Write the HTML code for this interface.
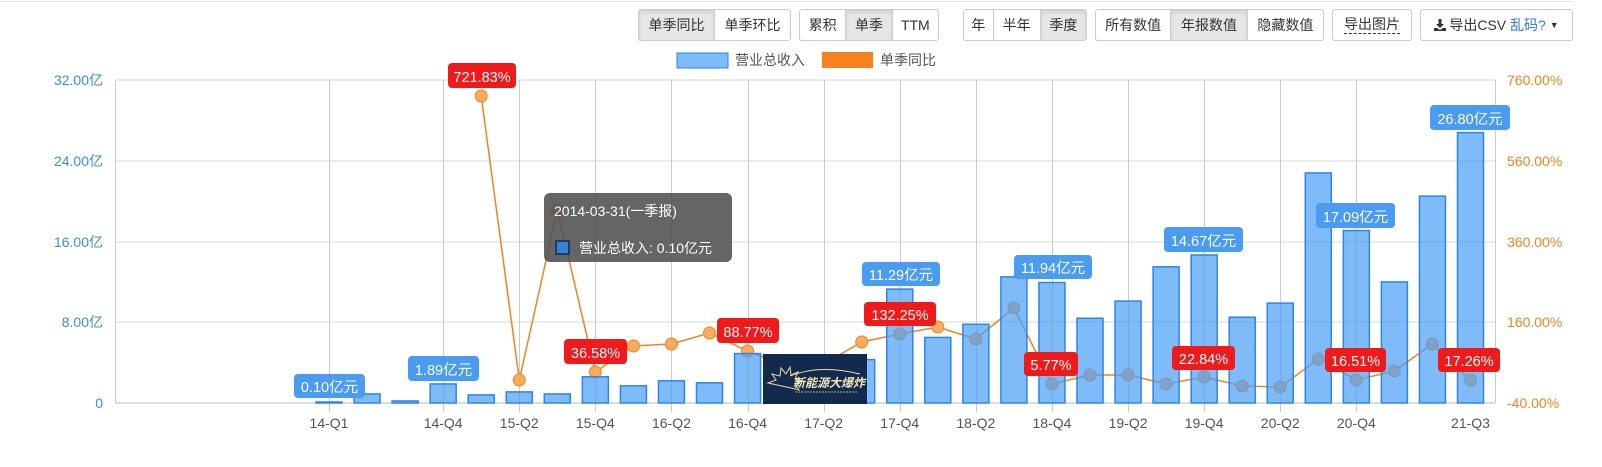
<!DOCTYPE html>
<html><head><meta charset="utf-8">
<style>
html,body{margin:0;padding:0;background:#fff;width:1602px;height:467px;overflow:hidden;font-family:"Liberation Sans","Noto Sans CJK SC",sans-serif;}
.tb{position:absolute;top:9px;height:32px;border:1px solid #ccc;border-radius:3px;display:flex;box-sizing:border-box;background:#fff;overflow:hidden}
.tb span{display:flex;align-items:center;justify-content:center;font-size:14px;color:#333;border-right:1px solid #ccc;box-sizing:border-box;height:100%}
.tb span:last-child{border-right:none}
.tb span.on{background:#e6e6e6;box-shadow:inset 0 2px 4px rgba(0,0,0,.1)}
svg{position:absolute;left:0;top:0}
</style></head><body>
<div style="position:absolute;left:0;top:1px;width:1573px;height:1px;background:#e5e5e5"></div>
<div class="tb" style="left:638px;width:153px"><span class="on" style="width:77px">单季同比</span><span style="width:76px">单季环比</span></div>
<div class="tb" style="left:799px;width:140px"><span style="width:47px">累积</span><span class="on" style="width:47px">单季</span><span style="width:46px">TTM</span></div>
<div class="tb" style="left:963px;width:124px"><span style="width:30px">年</span><span style="width:48px">半年</span><span class="on" style="width:46px">季度</span></div>
<div class="tb" style="left:1095px;width:229px"><span style="width:76px">所有数值</span><span class="on" style="width:77px">年报数值</span><span style="width:76px">隐藏数值</span></div>
<div class="tb" style="left:1332px;width:80px"><span style="width:80px"><u style="text-decoration:none;border-bottom:1px dashed #333;line-height:17px">导出图片</u></span></div>
<div class="tb" style="left:1420px;width:153px"><span style="width:153px">
<svg style="position:static;margin-right:3px" width="12" height="12" viewBox="0 0 12 12"><path d="M4.5 0h3v5h2.5l-4 4-4-4h2.5z M0 9h3l3 2 3-2h3v3H0z" fill="#333"/></svg>导出CSV&nbsp;<span style="border:none;color:#2a7ae2;width:auto">乱码?</span>&nbsp;<span style="border:none;width:auto;font-size:9px">▼</span></span></div>

<svg width="1602" height="467" id="c" font-family="Liberation Sans, Noto Sans CJK SC, sans-serif"></svg>
<script>
var s=document.getElementById('c'),h='';
h+='<rect x="677" y="53" width="51" height="15" fill="#80bbf9" stroke="#2a86e8"/><text x="735" y="65" font-size="14" fill="#555">营业总收入</text>';
h+='<rect x="822" y="52" width="51" height="16" fill="#f5821f"/><text x="880" y="65" font-size="14" fill="#555">单季同比</text>';
var gy=[80,161,242,322,403],ll=['32.00亿','24.00亿','16.00亿','8.00亿','0'],rl=['760.00%','560.00%','360.00%','160.00%','-40.00%'];
for(var k=0;k<5;k++){h+='<line x1="115" x2="1495" y1="'+gy[k]+'" y2="'+gy[k]+'" stroke="'+(k==4?'#bbb':'#d8d8d8')+'"/>';
h+='<text x="103" y="'+(gy[k]+5)+'" text-anchor="end" font-size="14" fill="#3a8de0">'+ll[k]+'</text>';
h+='<text x="1507" y="'+(gy[k]+5)+'" font-size="14" fill="#f5821f">'+rl[k]+'</text>';}
h+='<line x1="115.5" x2="115.5" y1="80" y2="403" stroke="#ccc"/><line x1="1495.5" x2="1495.5" y1="80" y2="403" stroke="#ccc"/>';
function X(i){return 329+38.05*i;}
var labs={0:'14-Q1',3:'14-Q4',5:'15-Q2',7:'15-Q4',9:'16-Q2',11:'16-Q4',13:'17-Q2',15:'17-Q4',17:'18-Q2',19:'18-Q4',21:'19-Q2',23:'19-Q4',25:'20-Q2',27:'20-Q4',30:'21-Q3'};
for(var i in labs){var x=Math.round(X(+i))+.5;if(i!=30)h+='<line x1="'+x+'" x2="'+x+'" y1="80" y2="412" stroke="#ccc"/>';
h+='<text x="'+X(+i)+'" y="428" text-anchor="middle" font-size="14" fill="#555">'+labs[i]+'</text>';}
var v=[0.1,0.9,0.2,1.89,0.8,1.1,0.9,2.6,1.7,2.2,2.0,4.9,4.5,4.6,4.3,11.29,6.5,7.8,12.5,11.94,8.4,10.1,13.5,14.67,8.5,9.9,22.8,17.09,12.0,20.5,26.8];
var py={4:96,5:380,6:210,7:372,8:346,9:344,10:333,11:351,12:366,13:364,14:342,15:334,16:327,17:339,18:308,19:384,20:375,21:375,22:384,23:377,24:386,25:387,26:359,27:380,28:371,29:344,30:380};
var pts=[];for(var i=4;i<=30;i++)pts.push(X(i).toFixed(1)+','+py[i]);
h+='<polyline points="'+pts.join(' ')+'" fill="none" stroke="#f5821f" stroke-width="1.5"/>';
for(var i=4;i<=30;i++)h+='<circle cx="'+X(i)+'" cy="'+py[i]+'" r="6" fill="#f8ad5e" stroke="#f5821f"/>';
for(var i=0;i<31;i++){var t=403-v[i]*10.09;h+='<rect x="'+(X(i)-13)+'" y="'+t+'" width="26" height="'+(403-t)+'" fill="rgba(74,158,246,0.7)" stroke="#2a86e8" stroke-width="1.5"/>';}
function lab(x1,x2,y1,y2,txt,c){h+='<rect x="'+x1+'" y="'+y1+'" width="'+(x2-x1)+'" height="'+(y2-y1)+'" rx="4" fill="'+c+'"/><text x="'+((x1+x2)/2)+'" y="'+(y2-6)+'" text-anchor="middle" font-size="14.5" fill="#fff">'+txt+'</text>';}
var B='#4a9cf2',R='#f01a1a';
lab(294,365,374,398,'0.10亿元',B);lab(408,479,356,381,'1.89亿元',B);lab(862,940,262,286,'11.29亿元',B);lab(1014,1092,255,279,'11.94亿元',B);
lab(1164,1243,227,252,'14.67亿元',B);lab(1316,1395,203,228,'17.09亿元',B);lab(1430,1510,105,130,'26.80亿元',B);
lab(448,516,63,88,'721.83%',R);lab(564,627,339,364,'36.58%',R);lab(717,779,318,343,'88.77%',R);lab(864,936,302,326,'132.25%',R);
lab(1024,1078,352,376,'5.77%',R);lab(1172,1235,346,370,'22.84%',R);lab(1325,1386,348,372,'16.51%',R);lab(1438,1500,348,372,'17.26%',R);
h+='<rect x="763" y="354" width="104" height="50" fill="#132a4f"/>';
h+='<path d="M768 383l8-3-4-6 8 2 1-8 5 6 4-7 1 8 7-3-3 7 7 2-7 3 4 6-8-2z" fill="none" stroke="#e8d9a0" stroke-width="1"/>';
h+='<path d="M790 376q30-12 70-2" fill="none" stroke="#e8d9a0" stroke-width="1"/>';
h+='<text x="793" y="387" font-size="12" font-weight="bold" font-style="italic" fill="#f2e6b8">新能源大爆炸</text>';
h+='<line x1="795" x2="857" y1="392" y2="392" stroke="#b9ad86" stroke-width="1" stroke-dasharray="2 1"/>';
h+='<rect x="544" y="193" width="188" height="69" rx="6" fill="rgba(80,80,80,0.88)"/>';
h+='<text x="554" y="216" font-size="14" fill="#fff">2014-03-31(一季报)</text>';
h+='<rect x="556" y="241" width="13" height="13" fill="#3a7fd0" stroke="#0d2a55" stroke-width="1.5"/>';
h+='<text x="579" y="253" font-size="14" fill="#fff">营业总收入: 0.10亿元</text>';
s.innerHTML=h;
</script>
</body></html>
